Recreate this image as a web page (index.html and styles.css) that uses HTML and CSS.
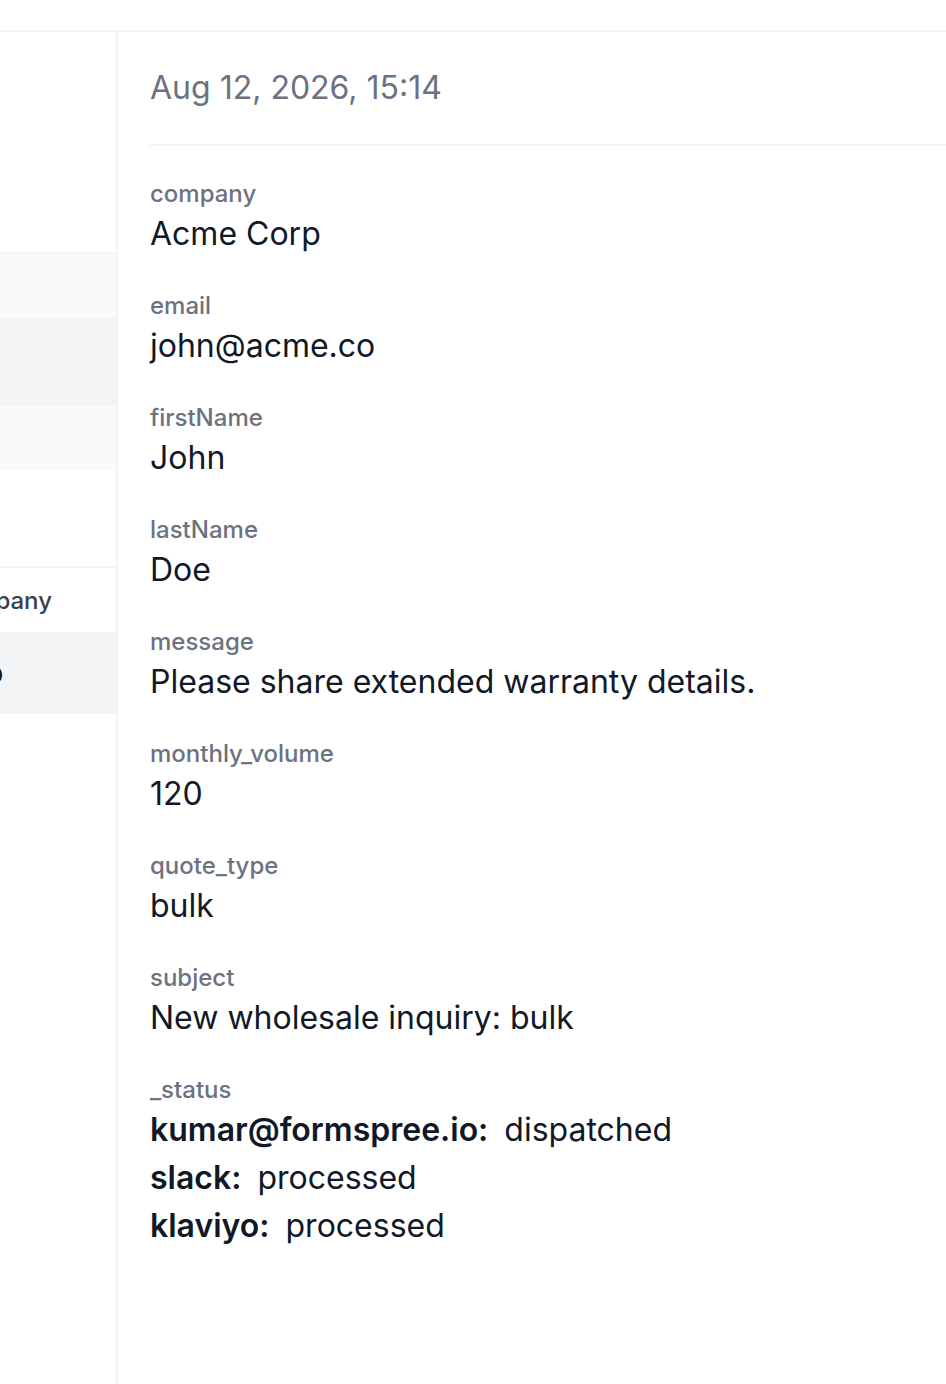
FILE: index.html
```html
<!DOCTYPE html>
<html lang="en">
  <head>
    <meta charset="UTF-8" />
    <meta name="viewport" content="width=device-width, initial-scale=1.0" />
    <title>Submission</title>
    <link rel="stylesheet" href="styles.css">
  </head>
  <body>
    <div class="topbar"></div>
    <div class="layout">
      <div class="sidebar">
        <div class="side-head"></div>
        <div class="side-row light short"></div>
        <div class="side-row gray tall"></div>
        <div class="side-row light short"></div>
        <div class="side-gap"></div>
        <div class="side-row th short"><span class="cell">Company</span></div>
        <div class="side-row gray mid"><span class="cell dark">Acme Corp</span></div>
      </div>
      <div class="detail">
        <div class="date">Aug 12, 2026, 15:14</div>
        <div class="fields">
          <div class="field">
            <div class="label">company</div>
            <div class="value">Acme Corp</div>
          </div>
          <div class="field">
            <div class="label">email</div>
            <div class="value">john@acme.co</div>
          </div>
          <div class="field">
            <div class="label">firstName</div>
            <div class="value">John</div>
          </div>
          <div class="field">
            <div class="label">lastName</div>
            <div class="value">Doe</div>
          </div>
          <div class="field">
            <div class="label">message</div>
            <div class="value">Please share extended warranty details.</div>
          </div>
          <div class="field">
            <div class="label">monthly_volume</div>
            <div class="value">120</div>
          </div>
          <div class="field">
            <div class="label">quote_type</div>
            <div class="value">bulk</div>
          </div>
          <div class="field">
            <div class="label">subject</div>
            <div class="value">New wholesale inquiry: bulk</div>
          </div>
          <div class="field">
            <div class="label">_status</div>
            <div class="value"><b>kumar@formspree.io:</b><span class="st">dispatched</span></div>
            <div class="value"><b>slack:</b><span class="st">processed</span></div>
            <div class="value"><b>klaviyo:</b><span class="st">processed</span></div>
          </div>
        </div>
      </div>
    </div>
  </body>
</html>
```

FILE: styles.css
```css
body {
  margin: 0;
  font-family: Inter, "Noto Sans", sans-serif;
  background: #fff;
  color: #111827;
}

.topbar {
  height: 30px;
  border-bottom: 2px solid #f3f4f6;
}

.layout {
  display: flex;
  min-height: 1352px;
}

.sidebar {
  width: 116px;
  flex-shrink: 0;
  border-right: 2px solid #f3f4f6;
  overflow: hidden;
}

.side-head {
  height: 220px;
  border-bottom: 2px solid #f3f4f6;
}

.side-row {
  display: flex;
  align-items: center;
  white-space: nowrap;
}

.side-row.short {
  height: 64px;
}

.side-row.tall {
  height: 88px;
}

.side-row.mid {
  height: 82px;
}

.side-row.light {
  background: #f9fafb;
}

.side-row.gray {
  background: #f3f4f6;
}

.side-gap {
  height: 96px;
  border-bottom: 2px solid #f3f4f6;
}

.cell {
  font-size: 24px;
  font-weight: 500;
  color: #374151;
  margin-left: -58px;
}

.cell.dark {
  color: #111827;
  font-size: 28px;
  font-weight: 400;
  margin-left: -146px;
}

.detail {
  flex: 1;
  padding-left: 32px;
  min-width: 0;
}

.date {
  font-size: 32px;
  line-height: 48px;
  color: #6b7280;
  padding: 32px 0;
  border-bottom: 2px solid #f3f4f6;
}

.fields {
  padding-top: 32px;
  display: flex;
  flex-direction: column;
  gap: 32px;
}

.label {
  font-size: 24px;
  font-weight: 500;
  line-height: 32px;
  color: #6b7280;
}

.value {
  font-size: 32px;
  line-height: 48px;
  color: #111827;
}

.value b {
  font-weight: 600;
}

.st {
  margin-left: 16px;
}
```
